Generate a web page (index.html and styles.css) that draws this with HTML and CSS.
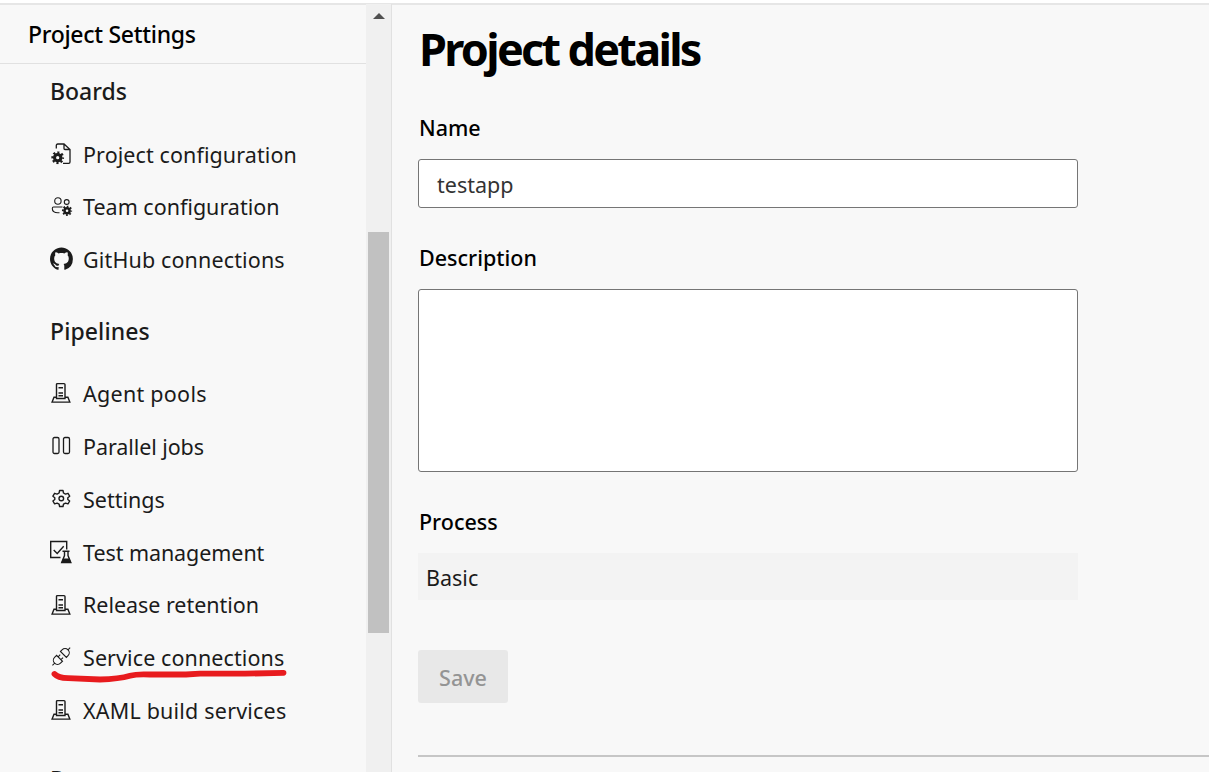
FILE: index.html
```
<!DOCTYPE html>
<html lang="en">
<head>
<meta charset="utf-8">
<title>Project Settings</title>
<link rel="stylesheet" href="styles.css">
</head>
<body>
<svg class="defs" width="0" height="0" aria-hidden="true">
  <symbol id="server" viewBox="0 0 24 24">
    <g fill="none" stroke="currentColor" stroke-width="1.4">
      <path d="M7.500 17.500V3.600q0-1 1-1h6.500q1 0 1 1v13.900zM7.500 16.200H5l-1.900 4.900h17.700l-1.900-4.900h-2.900M9.500 6.700h4.500M9.500 12h4.500M9.500 14.700h4.500"/>
    </g>
  </symbol>
  <symbol id="cog" viewBox="-10 -10 20 20">
    <g fill="none" stroke="currentColor">
      <circle r="4.900" stroke-width="4.800"/>
      <circle r="8.200" stroke-width="3.600" stroke-dasharray="3.220 3.220" stroke-dashoffset="1.610"/>
    </g>
  </symbol>
</svg>
<div class="app">
  <aside class="sidebar">
    <h2 class="sidebar-title"><span>Project Settings</span></h2>
    <nav class="nav">
      <section class="group">
        <h3 class="group-title">Boards</h3>
        <a class="item"><svg class="icon" viewBox="0 0 24 24"><path d="M7.300 6.500V3.500q0-1.500 1.500-1.500H15l6 5.500V20q0 1.300-1.300 1.300H14M15 2v4.500q0 1 1 1h5" fill="none" stroke="currentColor" stroke-width="1.300"/><use href="#cog" x="2.200" y="9.200" width="13" height="13"/></svg><span class="t-project">Project configuration</span></a>
        <a class="item"><svg class="icon" viewBox="0 0 24 24"><g fill="none" stroke="currentColor" stroke-width="1.100"><circle cx="8.900" cy="6" r="3.200"/><circle cx="17.700" cy="7" r="2.400"/><path d="M13.500 12H4.500q-1.200 0-1.200 1.500 0 4.200 5.600 4.200h1.600"/></g><use href="#cog" x="12.800" y="10.500" width="10.500" height="10.500"/></svg><span class="t-team">Team configuration</span></a>
        <a class="item"><svg class="icon" viewBox="0 0 24 24"><path transform="translate(1 .5) scale(1.43)" fill="currentColor" d="M8 0C3.580 0 0 3.580 0 8c0 3.540 2.290 6.530 5.470 7.590.4.070.55-.17.55-.38 0-.19-.01-.82-.01-1.490-2.010.37-2.530-.49-2.690-.94-.09-.23-.48-.94-.82-1.130-.28-.15-.68-.52-.01-.53.63-.01 1.080.58 1.230.82.72 1.210 1.870.87 2.330.66.070-.52.28-.87.51-1.070-1.780-.2-3.640-.89-3.640-3.950 0-.87.31-1.590.82-2.150-.08-.2-.36-1.020.08-2.120 0 0 .67-.21 2.200.82.640-.18 1.320-.27 2-.27s1.360.09 2 .27c1.530-1.040 2.200-.82 2.200-.82.440 1.100.160 1.920.08 2.120.510.560.820 1.270.820 2.150 0 3.070-1.870 3.750-3.650 3.950.290.250.540.730.540 1.480 0 1.070-.01 1.930-.01 2.200 0 .210.150.460.550.380A8.010 8.010 0 0 0 16 8c0-4.420-3.580-8-8-8z"/></svg><span class="t-github">GitHub connections</span></a>
      </section>
      <section class="group">
        <h3 class="group-title t-pipelines">Pipelines</h3>
        <a class="item"><svg class="icon"><use href="#server"/></svg><span class="t-agent">Agent pools</span></a>
        <a class="item"><svg class="icon" viewBox="0 0 24 24"><g fill="none" stroke="currentColor" stroke-width="1.300"><rect x="4" y="3.500" width="6" height="16" rx="1.500"/><rect x="14.500" y="3.500" width="6" height="16" rx="1.500"/></g></svg><span class="t-parallel">Parallel jobs</span></a>
        <a class="item"><svg class="icon" viewBox="0 0 24 24"><g transform="translate(12.300 11.500)" fill="none" stroke="currentColor" stroke-width="1.400" stroke-linejoin="round"><path d="M-1.700-8h3.400l.5 2.500 2 1.100 2.500-.8 1.700 2.900L6.500-.8v1.800l1.900 1.500-1.700 2.900-2.500-.8-2 1.100-.5 2.300h-3.400l-.5-2.300-2-1.100-2.500.8-1.700-2.900L-6.500 1v-1.800l-1.900-1.500 1.700-2.900 2.500.8 2-1.100z"/><circle r="2.300"/></g></svg><span>Settings</span></a>
        <a class="item"><svg class="icon" viewBox="0 0 24 24"><path d="M11.500 17.500H1.700V1.500h16v8M4.700 10l3.500 3.500 6.500-7.200" fill="none" stroke="currentColor" stroke-width="1.400"/><path d="M13.500 11.200h7M15.500 11v4.500L12.700 22.500h9.100L19 15.500V11" fill="none" stroke="currentColor" stroke-width="1.400"/><path d="M14 18.500h6.500l1.900 4.600H12.200z" fill="currentColor"/></svg><span class="t-test">Test management</span></a>
        <a class="item"><svg class="icon"><use href="#server"/></svg><span class="t-release">Release retention</span></a>
        <a class="item"><svg class="icon" viewBox="0 0 24 24"><g transform="translate(12.300 11.500) rotate(-45)" fill="none" stroke="currentColor" stroke-width="1.100"><path d="M-12.500 0h3M-2.500-4.200h-2.800a4.200 4.200 0 0 0 0 8.400h2.800zM-2.500-2h3M-2.500 2h3M3-4.200h2.300a4.200 4.200 0 0 1 0 8.400H3zM9.500 0h3"/></g></svg><span class="t-service">Service connections</span>
          <svg class="marker" viewBox="0 0 240 16"><path d="M4.500 5.500Q8 9.300 18 9.700L50 11Q69 10.500 80 7.300Q87 5.300 100 6L136 6L150 5.200H195L233.500 4.300" transform="translate(0 -.5)" fill="none" stroke="#e81b1e" stroke-width="5.800" stroke-linecap="round" stroke-linejoin="round"/></svg></a>
        <a class="item"><svg class="icon"><use href="#server"/></svg><span class="t-xaml">XAML build services</span></a>
      </section>
      <section class="group">
        <h3 class="group-title t-repos">Repos</h3>
      </section>
    </nav>
  </aside>
  <div class="scrollbar"><div class="arrow"></div><div class="thumb"></div></div>
  <main class="main">
    <h1 class="title"><span>Project details</span></h1>
    <label class="label">Name</label>
    <div class="input"><span>testapp</span></div>
    <label class="label">Description</label>
    <div class="textarea"></div>
    <label class="label">Process</label>
    <div class="readonly"><span>Basic</span></div>
    <button class="save" disabled>Save</button>
    <hr class="rule">
  </main>
</div>
</body>
</html>
```
FILE: styles.css
```
* { box-sizing: border-box; }
body {
  margin: 0;
  height: 772px;
  overflow: hidden;
  background: #f8f8f8;
  font-family: "Noto Sans", "Open Sans", sans-serif;
  color: #1b1b1b;
}
.defs { position: absolute; }
.app {
  display: flex;
  height: 772px;
  border-top: 3px solid #fff;
  box-shadow: inset 0 2px 0 #e6e6e6;
}
h1, h2, h3 { margin: 0; font-weight: 500; }
.sidebar { width: 366px; display: flex; flex-direction: column; overflow: hidden; }
.sidebar-title {
  flex: none;
  height: 61px;
  padding: 1px 0 0 28px;
  border-bottom: 1px solid #e1e1e1;
  line-height: 60px;
  font-size: 23px;
  letter-spacing: -0.3px;
  color: #000;
}
.nav { flex: 1; min-height: 0; overflow: hidden; }
.group:first-child { margin-top: -17.3px; }
.group-title {
  height: 81.2px;
  padding: 8px 0 0 50px;
  line-height: 73px;
  font-size: 23px;
}
.t-pipelines { padding-top: 9px; letter-spacing: 0.1px; }
.t-repos { padding-top: 6px; }
.item {
  position: relative;
  display: flex;
  align-items: center;
  height: 52.8px;
  padding-left: 49px;
  gap: 10px;
  font-size: 21.5px;
  white-space: nowrap;
}
.t-project { letter-spacing: 0.09px; }
.t-team { margin-bottom: 1.4px; }
.t-github { letter-spacing: 0.14px; }
.t-agent { letter-spacing: 0.27px; }
.t-parallel { letter-spacing: -0.08px; }
.t-test { letter-spacing: -0.07px; }
.t-release { letter-spacing: -0.04px; margin-bottom: 1.4px; }
.t-service { letter-spacing: 0.09px; }
.t-xaml { letter-spacing: 0.2px; }
.icon { width: 24px; height: 24px; flex: none; margin-top: -1px; }
.marker { position: absolute; left: 50px; top: 38px; width: 240px; height: 16px; }
.scrollbar {
  width: 26px;
  margin-top: 1px;
  padding: 9px 3px 0 2px;
  background: #f0f0f0;
  border-right: 1px solid #e1e1e1;
}
.arrow {
  width: 12px;
  height: 6px;
  margin-left: 5px;
  background: #505050;
  clip-path: polygon(50% 0, 100% 100%, 0 100%);
}
.thumb { height: 401px; width: 21px; margin-top: 213px; background: #c1c1c1; }
.main { flex: 1; display: flex; flex-direction: column; padding-left: 26px; color: #000; }
.title {
  height: 93px;
  line-height: 92px;
  padding-left: 1px;
  font-size: 45px;
  font-weight: 700;
  letter-spacing: -2.7px;
}
.label { height: 63px; line-height: 63px; font-size: 21.5px; font-weight: 500; padding-left: 1px; }
.input, .textarea {
  width: 660px;
  background: #fff;
  border: 1px solid #757575;
  border-radius: 3px;
}
.input { height: 49px; line-height: 49px; margin-bottom: 18px; padding-left: 18px; font-size: 21.5px; color: #333; }
.textarea { height: 183px; margin-bottom: 18px; }
.readonly { width: 660px; height: 47px; line-height: 49px; padding-left: 8px; background: #f3f3f3; font-size: 21.5px; color: #1b1b1b; }
.save {
  width: 90px;
  height: 53px;
  margin-top: 50px;
  padding: 2px 0 0;
  border: 0;
  border-radius: 3px;
  background: #e8e8e8;
  color: #949494;
  font: 500 21.5px "Noto Sans", "Open Sans", sans-serif;
}
.rule { width: 100%; height: 2px; margin: 52px 0 0; border: 0; background: #c6c6c6; }
```
